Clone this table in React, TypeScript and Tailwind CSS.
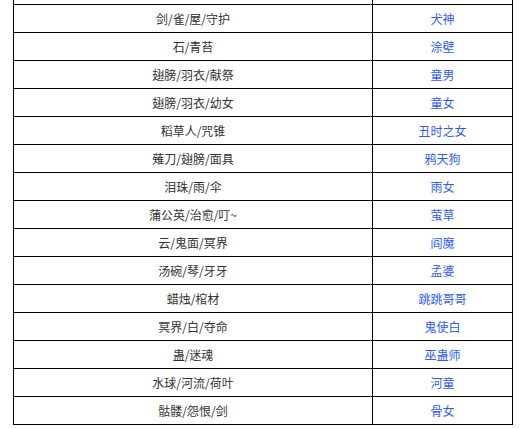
const rows: [string, string][] = [
  ["剑/雀/屋/守护", "犬神"],
  ["石/青苔", "涂壁"],
  ["翅膀/羽衣/献祭", "童男"],
  ["翅膀/羽衣/幼女", "童女"],
  ["稻草人/咒锥", "丑时之女"],
  ["薙刀/翅膀/面具", "鸦天狗"],
  ["泪珠/雨/伞", "雨女"],
  ["蒲公英/治愈/叮~", "萤草"],
  ["云/鬼面/冥界", "阎魔"],
  ["汤碗/琴/牙牙", "孟婆"],
  ["蜡烛/棺材", "跳跳哥哥"],
  ["冥界/白/夺命", "鬼使白"],
  ["蛊/迷魂", "巫蛊师"],
  ["水球/河流/荷叶", "河童"],
  ["骷髅/怨恨/剑", "骨女"],
];

export default function App() {
  return (
    <div
      className="w-[525px] h-[429px] bg-white overflow-hidden"
      style={{ fontFamily: '"Microsoft YaHei", "Noto Sans CJK SC", sans-serif' }}
    >
      <div className="ml-[13px] w-[500px] border-l border-black text-[12px]">
        {/* tail of the row above, cut off by the viewport */}
        <div className="flex h-[5px] border-b border-black">
          <div className="w-[359px] border-r border-black" />
          <div className="w-[140px] border-r border-black" />
        </div>
        {rows.map(([clue, name]) => (
          <div key={name} className="flex h-[28px] border-b border-black">
            <div className="w-[359px] border-r border-black flex items-center justify-center text-[#333333]">
              {clue}
            </div>
            <div className="w-[140px] border-r border-black flex items-center justify-center text-[#2f5bff]">
              {name}
            </div>
          </div>
        ))}
      </div>
    </div>
  );
}
